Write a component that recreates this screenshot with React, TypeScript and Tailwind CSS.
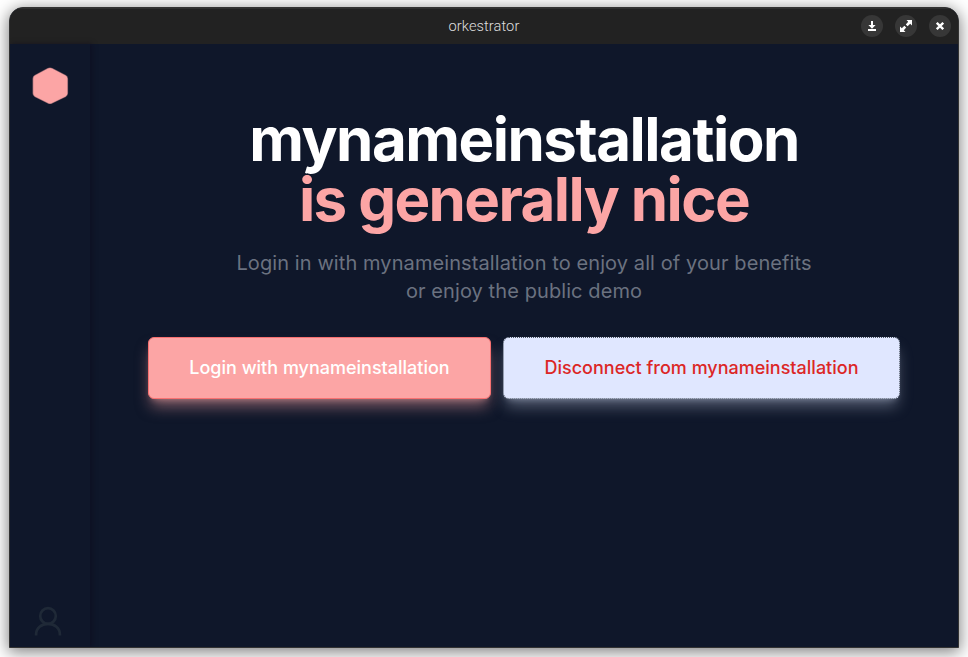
import React from "react";

function DownloadIcon() {
  return (
    <svg width="10" height="12" viewBox="0 0 10 12" fill="#fff">
      <path d="M4 1h2v4h2.6L5 8.7 1.4 5H4zM1 9h8v2H1z" />
    </svg>
  );
}

function ExpandIcon() {
  return (
    <svg width="12" height="12" viewBox="0 0 12 12" fill="#fff">
      <path d="M6.500 0H12v5.500L10.200 3.800 7.600 6.200 5.800 4.400 8.200 1.800zM0 12V6.500l1.800 1.700 2.600-2.400 1.800 1.800-2.400 2.600L5.500 12z" />
    </svg>
  );
}

function CloseIcon() {
  return (
    <svg width="8" height="8" viewBox="0 0 8 8" stroke="#fff" strokeWidth="2.3">
      <path d="M.8.8l6.4 6.4M7.2.8L.8 7.2" />
    </svg>
  );
}

function WindowButton({ children }: { children: React.ReactNode }) {
  return (
    <button className="flex size-[22px] items-center justify-center rounded-full bg-[#373737]">
      {children}
    </button>
  );
}

function TitleBar() {
  return (
    <header className="grid h-9 shrink-0 grid-cols-[1fr_auto_1fr] items-center border-t border-[#303030] bg-[#222222] pb-0.5">
      <span />
      <h2 className="font-['Roboto',sans-serif] text-[14.67px] leading-5 font-light tracking-[0.06px] text-[#dedede]">
        orkestrator
      </h2>
      <div className="flex items-center justify-end gap-3 pr-[7px]">
        <WindowButton>
          <DownloadIcon />
        </WindowButton>
        <WindowButton>
          <ExpandIcon />
        </WindowButton>
        <WindowButton>
          <CloseIcon />
        </WindowButton>
      </div>
    </header>
  );
}

function Sidebar() {
  return (
    <nav className="z-10 flex w-20 shrink-0 flex-col items-start justify-between pt-[22px] pb-[10px] pl-[21px] shadow-[2px_0_5px_rgba(13,10,28,0.6)]">
      <svg width="38" height="40" viewBox="0 0 38 40">
        <path
          d="M17 2.600Q19 1.600 21 2.600L34.500 9.600Q36.400 10.700 36.400 12.800V27.200Q36.400 29.300 34.500 30.400L21 36.900Q19 37.900 17 36.900L4 30.400Q2.200 29.300 2.200 27.200V12.800Q2.200 10.700 4 9.600Z"
          fill="#fca5a5"
          stroke="#fca5a5"
          strokeOpacity="0.5"
          strokeWidth="1.4"
        />
      </svg>
      <svg
        className="ml-[3px]"
        width="28"
        height="31"
        viewBox="0 0 28 31"
        fill="none"
        stroke="#1f2937"
        strokeWidth="2.7"
      >
        <circle cx="14" cy="10" r="7.8" />
        <path d="M2.100 29.500v-1C2.100 22 7.400 17.800 14 17.800S25.900 22 25.900 28.500v1" />
      </svg>
    </nav>
  );
}

export default function App() {
  return (
    <div className="h-[657px] w-[968px] overflow-hidden bg-white pt-[7px] pl-[9px] font-['Inter',sans-serif]">
      <div className="flex h-[641px] w-[950px] flex-col overflow-hidden rounded-t-[14px] border border-[#333333] bg-[#0f172a] shadow-[0_3px_16px_1px_rgba(0,0,0,0.5)]">
        <TitleBar />
        <div className="flex min-h-0 flex-1">
          <Sidebar />
          <main className="flex flex-1 flex-col items-center pt-[65px] text-center">
            <h1 className="text-6xl leading-none font-bold tracking-tight text-white">
              <span className="block">mynameinstallation</span>
              <span className="block tracking-[-1.6px] text-[#fca5a5]">is generally nice</span>
            </h1>
            <p className="mt-5 text-xl tracking-[0.09px] text-[#6b7280]">
              Login in with mynameinstallation to enjoy all of your benefits
              <br />
              or enjoy the public demo
            </p>
            <div className="mt-8 flex gap-3">
              <button className="h-[62px] w-[343px] rounded-md border border-[#f87171] bg-[#fca5a5] text-lg font-medium text-white shadow-[0_10px_15px_-3px_rgba(252,165,165,0.5),0_4px_6px_-4px_rgba(252,165,165,0.5)]">
                Login with mynameinstallation
              </button>
              <button className="h-[62px] w-[397px] rounded-md border border-dotted border-[#4b5563] bg-[#e0e7ff] text-lg font-medium text-[#dc2626] shadow-[0_10px_15px_-3px_rgba(224,231,255,0.35),0_4px_6px_-4px_rgba(224,231,255,0.35)]">
                Disconnect from mynameinstallation
              </button>
            </div>
          </main>
        </div>
      </div>
    </div>
  );
}
